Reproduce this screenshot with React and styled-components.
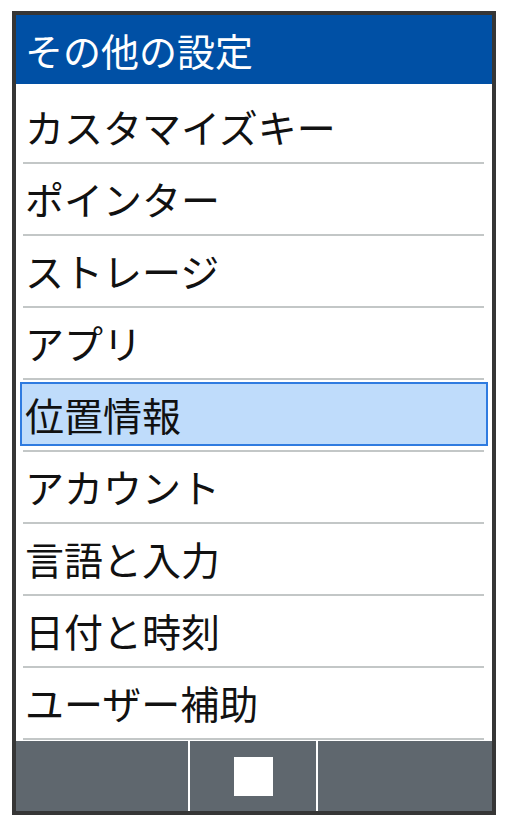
import React from 'react'
import styled, { createGlobalStyle } from 'styled-components'

const GlobalStyle = createGlobalStyle`
  body {
    margin: 0;
    background: #ffffff;
    font-family: "Noto Sans CJK JP", "Noto Sans", sans-serif;
  }
`

const Frame = styled.div`
  box-sizing: border-box;
  width: 484px;
  height: 804px;
  margin: 11px 0 0 12px;
  border: 4px solid #363636;
  display: flex;
  flex-direction: column;
  background: #ffffff;
`

const Header = styled.div`
  height: 69px;
  flex: none;
  background: #0050a5;
  color: #ffffff;
  font-size: 38px;
  display: flex;
  align-items: center;
  padding-left: 9px;
  line-height: 1;
`

const List = styled.div`
  flex: 1;
  padding-top: 8px;
  display: flex;
  flex-direction: column;
`

const Row = styled.div`
  display: flex;
  flex-direction: column;
`

const Item = styled.div`
  box-sizing: border-box;
  height: 64px;
  margin: 2px 4px 4px;
  padding-left: 3px;
  display: flex;
  align-items: center;
  font-size: 39px;
  line-height: 1;
  color: #111111;
  border: 2px solid ${p => (p.selected ? '#2f7be0' : 'transparent')};
  background: ${p => (p.selected ? '#bfdcfb' : 'transparent')};
`

const Separator = styled.div`
  height: 2px;
  margin: 0 8px 0 7px;
  background: #c3c7c7;
`

const Footer = styled.div`
  height: 70px;
  flex: none;
  background: #5f676e;
  display: grid;
  grid-template-columns: 172px 128px 1fr;
`

const SoftKey = styled.div`
  display: flex;
  align-items: center;
  justify-content: center;
  border-left: ${p => (p.divided ? '2px solid #ffffff' : 'none')};
`

const StopSquare = styled.div`
  width: 39px;
  height: 39px;
  background: #ffffff;
`

const items = [
  'カスタマイズキー',
  'ポインター',
  'ストレージ',
  'アプリ',
  '位置情報',
  'アカウント',
  '言語と入力',
  '日付と時刻',
  'ユーザー補助'
]

const App = () => (
  <>
    <GlobalStyle />
    <Frame>
      <Header>その他の設定</Header>
      <List>
        {items.map(label => (
          <Row key={label}>
            <Item selected={label === '位置情報'}>{label}</Item>
            <Separator />
          </Row>
        ))}
      </List>
      <Footer>
        <SoftKey />
        <SoftKey divided>
          <StopSquare />
        </SoftKey>
        <SoftKey divided />
      </Footer>
    </Frame>
  </>
)

export default App
